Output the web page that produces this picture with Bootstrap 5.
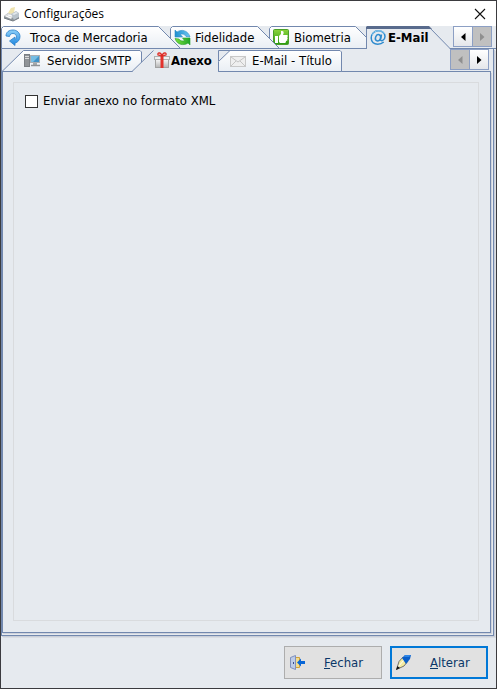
<!DOCTYPE html>
<html lang="pt-BR">
<head>
<meta charset="utf-8">
<meta name="viewport" content="width=device-width, initial-scale=1">
<title>Configurações</title>
<link href="https://cdn.jsdelivr.net/npm/bootstrap@5.3.0/dist/css/bootstrap.min.css" rel="stylesheet">
<style>
:root{--face:#e6eaef;--edge:#7288ae}
body{font-family:"DejaVu Sans Condensed","Noto Sans",sans-serif;font-size:13px;line-height:16px;color:#000;background:var(--face)}
.win{border:1px solid #3b3b3f;background:var(--face)}
.titlebar{height:25px;background:#fff;font-family:"Open Sans",sans-serif;font-size:12px;padding:0 8px 0 2px}
.win-close{width:16px;height:16px;line-height:0}
.strip{height:23px;box-shadow:inset 0 -1px var(--edge)}
.tab{display:grid;height:23px;padding:0;border:0;background:none;color:#000;text-align:left;position:relative;flex:none;pointer-events:none}
.tab>*{grid-area:1/1;pointer-events:auto}
.tab-face{display:block;height:23px;overflow:visible;fill:url(#tabfill);stroke:var(--edge)}
.tab-face .flat{fill:var(--face)}
.tab-text{display:flex;align-items:center;white-space:nowrap;height:23px}
.tab-text svg{flex:none}
.lap{margin-right:-10px}
.scroller{flex:none;border:1px solid #8c9fc4;background:#8c9fc4;gap:1px}
.scroller button{width:18px;height:19px;border:0;padding:0;background:linear-gradient(#fff,#e4e6ea);line-height:0}
.scroller button:disabled{background:#c0c0c0}
.scroller-near{margin-right:2px}
.page-outer{border:1px solid var(--edge);border-top:0;margin-right:2px;padding:0 2px 2px 0;box-shadow:1px 1px #c9ced8,2px 2px #d9dde3}
.page-inner{border:1px solid var(--edge);border-top:0;padding:10px 11px 11px 10px;box-shadow:1px 1px #cfd3dc}
.pane{border:1px solid #d9dbde;padding:10px 11px}
.pane .form-check-input{width:13px;height:13px;margin:0;border:1px solid #333;border-radius:0;background-color:#fff;float:none}
.actions{padding:10px 8px 9px}
.act{width:98px;height:33px;padding:0 0 0 4px;border:1px solid #adadad;background:#e1e1e1;color:#0b3768;text-align:left;line-height:16px}
.act span{padding-left:18px}
.act-main{border:2px solid #0078d7;padding-left:3px}
.i-gap8{gap:8px}.i-gap6{gap:6px}.i-gap5{gap:5px}.i-gap4{gap:4px}.i-gap1{gap:1px}.i-gap2{gap:2px}
.x-first{padding-left:4px}.x-near{padding-left:4px}.x-slant{padding-left:22px}.x-last{padding-left:12px}
</style>
<script src="https://cdn.jsdelivr.net/npm/bootstrap@5.3.0/dist/js/bootstrap.bundle.min.js"></script>
</head>
<body>
<svg width="0" height="0" class="position-absolute" aria-hidden="true"><defs>
<linearGradient id="tabfill" x2="0" y2="1"><stop stop-color="#fff"/><stop offset="1" stop-color="#e9eef4"/></linearGradient>
<linearGradient id="blue" x2="0" y2="1"><stop stop-color="#8ccff8"/><stop offset="1" stop-color="#1e86e0"/></linearGradient>
<linearGradient id="sky" x2="1" y2="0"><stop stop-color="#1f8fd0"/><stop offset="1" stop-color="#6cc6ee"/></linearGradient>
<linearGradient id="leaf" x2="1" y2="0"><stop stop-color="#7be23c"/><stop offset="1" stop-color="#1fa52a"/></linearGradient>
<linearGradient id="green" x2="0" y2="1"><stop stop-color="#8bd43c"/><stop offset="1" stop-color="#2a9a10"/></linearGradient>
<linearGradient id="box" x2="0" y2="1"><stop stop-color="#f8f8f8"/><stop offset="1" stop-color="#b4b4b4"/></linearGradient>
</defs></svg>
<div class="win d-flex flex-column min-vh-100">
  <header class="titlebar d-flex align-items-center">
    <svg width="17" height="16" viewBox="0 0 17 16" aria-hidden="true"><path d="M1 10l4-3 11 2v3l-6 3-9-3z" fill="#8f969c"/><path d="M1 10l4-3 7 2-4 4z" fill="#d8dadb"/><path d="M5 7l3-5 4-1-1 6-2 1z" fill="#efe3ae"/><path d="M8 8l5-3 3 2v4l-5 3z" fill="#b9c3cb"/><path d="M9 8l4-2 2 1-4 2z" fill="#e3e8ec"/><path d="M1 12l9 3 6-3" fill="none" stroke="#767d83"/><path d="M3 10l5 2M5 9l4 1" stroke="#fff"/></svg>
    <span class="ps-1">Configurações</span>
    <button class="win-close btn p-0 border-0 ms-auto" aria-label="Fechar janela"><svg width="12" height="12" viewBox="0 0 12 12"><path d="M1 1l10 10M11 1L1 11" stroke="#111" stroke-width="1.1"/></svg></button>
  </header>

  <nav class="strip d-flex" role="tablist" aria-label="Seções">
    <button class="tab lap z-3" role="tab">
      <svg class="tab-face" width="179" viewBox="0 0 179 23"><path d="M.5 22.5V2.5l2-2H157.500l22 22z"/></svg>
      <span class="tab-text x-first i-gap8"><svg width="17" height="17" viewBox="0 0 17 17"><path d="M1 7C1 3 4 1 8 1c4 0 7 3 7 6.500 0 3-2 6-5 6.500v2.500L4.500 12 10 8v2.500c1-.5 1.500-1.500 1.500-2.500C11.500 6 10 4.500 8 4.500S5 5.500 4.500 7.500z" fill="url(#blue)" stroke="#2a7fc9" stroke-width=".8"/></svg>Troca de Mercadoria</span>
    </button>
    <button class="tab lap z-2" role="tab">
      <svg class="tab-face" width="109" viewBox="0 0 109 23"><path d="M.5 22.5V2.5l2-2H87.500l22 22z"/></svg>
      <span class="tab-text x-near i-gap4"><svg width="17" height="17" viewBox="0 0 17 17"><path d="M1 1l2 2c4-3 11-2 13 5l-4-.5C11 5 8 4.500 6.500 5.500L8.500 8H1z" fill="url(#sky)" stroke="#2a8cc4" stroke-width=".6"/><path d="M16 16l-2-2C10 17 3 16 1 9.500l4 .5c1 2 4 2.500 5.500 1.500L8.500 9H16z" fill="url(#leaf)" stroke="#27a22c" stroke-width=".6"/></svg>Fidelidade</span>
    </button>
    <button class="tab lap z-1" role="tab">
      <svg class="tab-face" width="107" viewBox="0 0 107 23"><path d="M.5 22.5V2.5l2-2H86.500l22 22z"/></svg>
      <span class="tab-text x-near i-gap4"><svg width="17" height="17" viewBox="0 0 17 17"><rect x=".5" y=".5" width="15" height="15" rx="1" fill="url(#green)" stroke="#4a9f2a"/><path d="M2 7h3v7H2zM6 7l2-2V2h1c2 0 2 2 1 4h4c1 0 1 2 0 2 1 1 1 2 0 2 1 1 0 2-1 2 0 2-1 2-2 2H7l-1-1z" fill="#fff"/></svg>Biometria</span>
    </button>
    <button class="tab z-3 fw-bold" role="tab" aria-selected="true">
      <svg class="tab-face" width="84" viewBox="0 0 84 23"><path class="flat" d="M1 24V1h62l21 22v1z" stroke="none"/><path d="M.5 22.500V1M63 1l21 21.500" fill="none"/><path d="M0 3V1l1-1h62l3 3z" fill="#596b8d" stroke="none"/></svg>
      <span class="tab-text x-near i-gap1"><svg width="17" height="17" viewBox="0 0 17 17"><g fill="none" stroke="#2f8bce" stroke-width="1.500"><ellipse cx="8" cy="8.800" rx="2.500" ry="3.200" transform="rotate(20 8 8.800)"/><path d="M11.500 5.500l-1 5c0 2.500 4.500 1 4.500-3C15 4 12 1.800 8.500 1.800 4 1.800 1.200 5 1.200 9c0 4 3 6.200 6.500 6.200 2.500 0 4.500-.8 6-2.200"/></g><path d="M2 6C4 1 12 0 14.500 5" fill="none" stroke="#8bcdf2"/></svg>E-Mail</span>
    </button>
    <div class="scroller d-flex ms-auto me-1 align-self-start">
      <button aria-label="Anterior"><svg width="5" height="8" viewBox="0 0 5 8"><path d="M4.500 0v8L0 4z"/></svg></button>
      <button aria-label="Próximo" disabled><svg width="5" height="8" viewBox="0 0 5 8"><path d="M0 0v8l4.500-4z" fill="#8f8f8f"/></svg></button>
    </div>
  </nav>

  <main class="page-outer d-flex flex-column flex-fill">
    <nav class="strip d-flex" role="tablist" aria-label="E-Mail">
      <button class="tab lap" role="tab">
        <svg class="tab-face" width="140" viewBox="0 0 140 23"><path d="M0 22.500L21.500 1.500H138l1.500 1.500v19.500z"/></svg>
        <span class="tab-text x-slant i-gap6"><svg width="17" height="17" viewBox="0 0 17 17"><rect x=".5" y="2.500" width="5" height="12" fill="#909498" stroke="#7b8085"/><path d="M1 4.500h4M1 6.500h4" stroke="#dcdcdc"/><rect x="6.500" y="3.500" width="9" height="7" fill="#3f92c8" stroke="#a9aeb3"/><path d="M7 4h8l-6 6H7z" fill="#76bde4"/><path d="M9 11h4v2H9z" fill="#a5a9ac"/><path d="M7 13.500h9" stroke="#8e9296" stroke-width="1.500"/></svg>Servidor SMTP</span>
      </button>
      <button class="tab z-3 fw-bold" role="tab" aria-selected="true">
        <svg class="tab-face" width="86" viewBox="0 0 86 23"><path class="flat" d="M0 23L21.500 1H86v22z" stroke="none"/><path d="M0 22.500L21.500 1.500" fill="none"/></svg>
        <span class="tab-text x-slant i-gap1"><svg width="16" height="17" viewBox="0 0 16 17"><rect x="1.500" y="7.500" width="13" height="8" fill="url(#box)" stroke="#a2a2a2"/><rect x=".5" y="4.500" width="15" height="3" fill="#f0f0f0" stroke="#b0b0b0"/><path d="M6.500 4h3v12h-3z" fill="#e3322c"/><path d="M8 4C7 0 3 0 4 3zM8 4c1-4 5-4 4-1z" fill="#f7b5ae" stroke="#dc2a24" stroke-width="1.200"/></svg>Anexo</span>
      </button>
      <button class="tab" role="tab">
        <svg class="tab-face" width="124" viewBox="0 0 124 23"><path d="M.5 22.500V12.500l11.500-11H122l1.500 1.500v19.500z"/><path d="M.5 12V1.500H12" fill="none"/></svg>
        <span class="tab-text x-last i-gap5"><svg width="17" height="17" viewBox="0 0 17 17"><rect x=".5" y="4.500" width="15" height="10" fill="#efefef" stroke="#c8c8c8"/><path d="M1 5l7 5 7-5M1 14l5-5M15 14l-5-5" fill="none" stroke="#c4c4c4"/></svg>E-Mail - Título</span>
      </button>
      <div class="scroller scroller-near d-flex ms-auto align-self-start">
        <button aria-label="Anterior" disabled><svg width="5" height="8" viewBox="0 0 5 8"><path d="M4.500 0v8L0 4z" fill="#8f8f8f"/></svg></button>
        <button aria-label="Próximo"><svg width="5" height="8" viewBox="0 0 5 8"><path d="M0 0v8l4.500-4z"/></svg></button>
      </div>
    </nav>
    <section class="page-inner d-flex flex-column flex-fill">
      <div class="pane flex-fill">
        <div class="d-flex align-items-center i-gap5">
          <input class="form-check-input" type="checkbox" id="xml">
          <label for="xml">Enviar anexo no formato XML</label>
        </div>
      </div>
    </section>
  </main>

  <footer class="actions d-flex justify-content-end gap-2">
    <button class="act d-flex align-items-center"><svg width="17" height="17" viewBox="0 0 17 17"><path d="M5 3.500h5.500v10H5z" fill="#f3dc8c" stroke="#d0a13b"/><path d="M1.500 3.500l5-2v14l-5-2z" fill="#bccbe8" stroke="#7f90bd"/><path d="M4 8h1v2H4z" fill="#3b4d86"/><path d="M8 8.500l4-4v2.500h4v3h-4v2.500z" fill="#0866d6"/></svg><span><u>F</u>echar</span></button>
    <button class="act act-main d-flex align-items-center"><svg width="17" height="17" viewBox="0 0 17 17"><path d="M1.500 15.500l2.500-8L8 3l5 4-4 5z" fill="#f4eba0" stroke="#555" stroke-width=".8"/><path d="M3 13l6-7" stroke="#fff"/><path d="M7 4l3-3h6l-1 4-4 5z" fill="#0b5fc9"/><path d="M10 1h6l-2 2H9z" fill="#2f86e6"/><path d="M1 16l1.500-4L5 14z" fill="#111"/></svg><span><u>A</u>lterar</span></button>
  </footer>
</div>
</body>
</html>
